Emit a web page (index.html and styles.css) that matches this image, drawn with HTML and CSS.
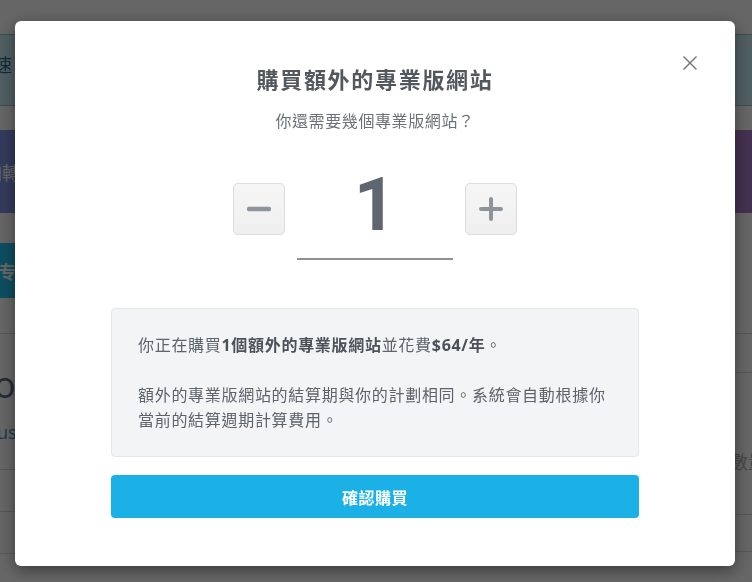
FILE: index.html
```html
<!DOCTYPE html>
<html lang="zh-Hant">
<head>
  <meta charset="UTF-8" />
  <meta name="viewport" content="width=device-width, initial-scale=1" />
  <title>購買額外的專業版網站</title>
  <link rel="stylesheet" href="styles.css">
</head>
<body>
  <div class="page">
    <div class="topbar"><span class="edge">加速 -</span></div>
    <div class="banner"><span class="edge">增加轉</span></div>
    <div class="cta"><span class="edge">增加专</span></div>
    <div class="cols">
      <div class="col-left">
        <div class="big">on</div>
        <div class="link">us</div>
        <div class="rule first"></div>
        <div class="rule"></div>
        <div class="rule"></div>
      </div>
      <div class="col-right">
        <div class="rule top"></div>
        <div class="count">數量</div>
        <div class="rule low"></div>
        <div class="rule"></div>
      </div>
    </div>
  </div>

  <div class="overlay">
    <div class="modal">
      <button class="close" aria-label="關閉">
        <svg width="16" height="16" viewBox="0 0 16 16"><path d="M1.5 1.5 L14.5 14.5 M14.5 1.5 L1.5 14.5" stroke="#6b7179" stroke-width="1.4" fill="none"/></svg>
      </button>
      <h2 class="title">購買額外的專業版網站</h2>
      <p class="subtitle">你還需要幾個專業版網站？</p>

      <div class="stepper">
        <button class="step" aria-label="減少">
          <svg width="24" height="24" viewBox="0 0 24 24"><path d="M2 12 H22" stroke="#8e949b" stroke-width="4.5" stroke-linecap="round"/></svg>
        </button>
        <div class="qty">1</div>
        <button class="step" aria-label="增加">
          <svg width="24" height="24" viewBox="0 0 24 24"><path d="M2 12 H22 M12 2 V22" stroke="#8e949b" stroke-width="4" stroke-linecap="round"/></svg>
        </button>
      </div>

      <div class="info">
        <p>你正在購買<b>1個額外的專業版網站</b>並花費<b>$64/年</b>。</p>
        <p>額外的專業版網站的結算期與你的計劃相同。系統會自動根據你當前的結算週期計算費用。</p>
      </div>

      <button class="confirm">確認購買</button>
    </div>
  </div>
</body>
</html>
```

FILE: styles.css
```css
body { margin: 0; background: #fff; font-family: "Open Sans", "Noto Sans CJK TC", sans-serif; overflow: hidden; }

/* page behind the dialog */
.page { height: 582px; overflow: hidden; }
.topbar { margin-top: 34px; height: 70px; background: #c9edf8; border-top: 1px solid #8fc3d2; border-bottom: 1px solid #8fc3d2; display: flex; align-items: center; }
.banner { margin-top: 24px; height: 83px; background: linear-gradient(90deg, #7f93e6, #a98ad6 60%, #ab7ac8); display: flex; align-items: center; }
.cta { margin-top: 30px; height: 55px; width: 260px; background: #22c3f2; display: flex; align-items: center; }
.edge { margin-left: -34px; font-size: 18px; color: #fff; white-space: nowrap; }
.topbar .edge { color: #2a6d86; margin: -12px 0 0 -24px; }
.cta .edge { font-weight: 700; margin-left: -38px; }
.cols { display: grid; grid-template-columns: 1fr 1fr; margin-top: 35px; border-top: 1px solid #d8d8d8; }
.big { margin: 23px 0 0 -6px; font-size: 36px; line-height: 56px; color: #5a6d80; }
.link { margin: 7px 0 0 -3px; font-size: 18px; line-height: 24px; color: #3c95c6; }
.rule { border-top: 1px solid #d8d8d8; height: 41px; }
.rule.first { margin-top: 25px; }
.col-right .rule.top { margin-top: 38px; }
.count { margin: 36px -14px 0 0; text-align: right; font-size: 18px; line-height: 24px; color: #b0b0b0; }
.rule.low { margin-top: 40px; height: 36px; }

/* dialog */
.overlay { position: fixed; inset: 0; background: rgba(0, 0, 0, 0.6); }
.modal { position: relative; box-sizing: border-box; width: 720px; height: 545px; margin: 21px 0 0 15px; padding: 43px 96px 0; background: #fff; border-radius: 6px; box-shadow: 0 4px 16px rgba(0, 0, 0, 0.45); text-align: center; }
.close { position: absolute; top: 34px; right: 37px; padding: 0; border: 0; background: none; cursor: pointer; line-height: 0; }
.title { margin: 0; font-size: 22px; line-height: 30px; font-weight: 700; letter-spacing: 1.7px; color: #53585f; }
.subtitle { margin: 15px 0 0; font-size: 16px; line-height: 24px; letter-spacing: 0.6px; color: #6b7178; }

.stepper { display: flex; justify-content: center; align-items: flex-start; gap: 12px; margin-top: 50px; }
.step { width: 52px; height: 52px; padding: 0; display: flex; align-items: center; justify-content: center; background: linear-gradient(#f6f6f6, #efefef); border: 1px solid #dcdcdc; border-radius: 5px; cursor: pointer; }
.qty { width: 156px; height: 75px; border-bottom: 2px solid #8d9197; font-family: Roboto, sans-serif; font-size: 74px; line-height: 44px; font-weight: 700; color: #5f6670; }

.info { margin-top: 48px; padding: 24px 26px 23px; background: #f3f4f6; border: 1px solid #e4e6e9; border-radius: 4px; text-align: left; font-size: 16px; line-height: 25px; letter-spacing: 0.7px; color: #5d636b; }
.info p { margin: 0; }
.info p + p { margin-top: 25px; }
.info b { color: #4c5259; }

.confirm { display: block; width: 100%; height: 43px; margin-top: 18px; border: 0; border-radius: 4px; background: #1cb1e6; color: #fff; font-family: inherit; font-size: 16px; font-weight: 700; letter-spacing: 0.5px; cursor: pointer; }
```
